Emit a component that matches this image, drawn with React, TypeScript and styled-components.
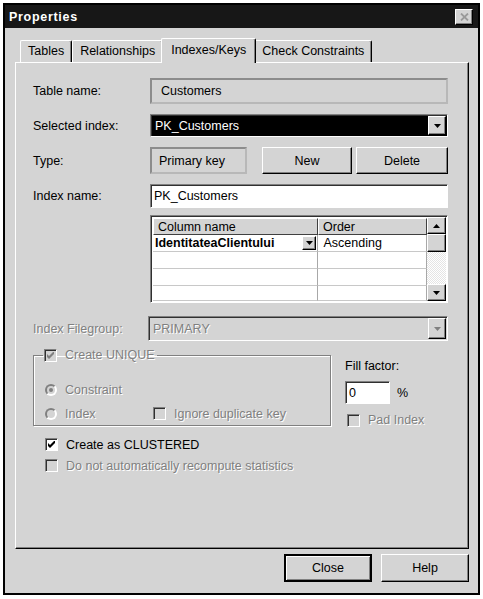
import React from 'react'
import styled, { createGlobalStyle, css } from 'styled-components'

const COLORS = {
  face: '#d4d4d4',
  light: '#ffffff',
  shadow: '#808080',
  dark: '#000000',
  title: '#171717',
}

const GlobalStyle = createGlobalStyle`
  body {
    margin: 0;
    background: #fff;
  }
`

const raised = css`
  box-sizing: border-box;
  border: 1px solid;
  border-color: ${COLORS.light} ${COLORS.dark} ${COLORS.dark} ${COLORS.light};
  box-shadow: inset -1px -1px ${COLORS.shadow};
  background: ${COLORS.face};
`

const sunken = css`
  box-sizing: border-box;
  border: 1px solid;
  border-color: ${COLORS.shadow} ${COLORS.light} ${COLORS.light} ${COLORS.shadow};
  padding: 1px;
  box-shadow: inset 1px 1px #303030;
`

const disabledText = css`
  color: ${COLORS.shadow};
  text-shadow: 1px 1px 0 ${COLORS.light};
`

const Window = styled('div')`
  margin: 3px 0 0 3px;
  width: 477px;
  height: 592px;
  box-sizing: border-box;
  border: 2px solid ${COLORS.dark};
  background: ${COLORS.face};
  display: flex;
  flex-direction: column;
  font-family: 'Liberation Sans', Arial, sans-serif;
  font-size: 12.5px;
  color: ${COLORS.dark};
`

const TitleBar = styled('div')`
  height: 23px;
  flex: none;
  background: ${COLORS.title};
  display: flex;
  align-items: center;
  justify-content: space-between;
  padding: 0 5px 0 4px;
`

const Title = styled('span')`
  color: #fff;
  font-weight: bold;
  letter-spacing: 0.7px;
`

const CloseBox = styled('div')`
  ${raised};
  width: 18px;
  height: 16px;
  display: flex;
  align-items: center;
  justify-content: center;
`

const Body = styled('div')`
  flex: 1;
  display: flex;
  flex-direction: column;
  padding-top: 10px;
`

const TabStrip = styled('div')`
  display: flex;
  align-items: flex-end;
  height: 24px;
  margin: 0 9px 0 10px;
  padding-left: 5px;
  position: relative;
  z-index: 1;
`

const Tab = styled('div')<{ $active?: boolean }>`
  box-sizing: border-box;
  height: ${(p) => (p.$active ? 25 : 22)}px;
  padding: 0 ${(p) => (p.$active ? 9 : 7)}px ${(p) => (p.$active ? 3 : 1)}px;
  margin: 0 ${(p) => (p.$active ? -2 : 0)}px ${(p) => (p.$active ? -1 : 0)}px;
  display: flex;
  align-items: center;
  border-top: 1px solid ${COLORS.light};
  border-left: 1px solid ${COLORS.light};
  border-right: 1px solid ${COLORS.dark};
  box-shadow: inset -1px 0 ${COLORS.shadow};
  border-radius: 2px 2px 0 0;
  background: ${COLORS.face};
  position: relative;
  z-index: ${(p) => (p.$active ? 2 : 1)};
  white-space: nowrap;
`

const Panel = styled('div')`
  height: 487px;
  flex: none;
  margin: 0 9px 0 10px;
  box-sizing: border-box;
  border-top: 1px solid ${COLORS.light};
  border-left: 1px solid ${COLORS.light};
  border-right: 1px solid ${COLORS.dark};
  border-bottom: 1px solid ${COLORS.dark};
  box-shadow: inset -1px -1px ${COLORS.shadow};
  padding: 15px 0 0 17px;
  display: flex;
  flex-direction: column;
`

const Row = styled('div')<{ $h: number; $gap?: number }>`
  display: flex;
  align-items: center;
  height: ${(p) => p.$h}px;
  margin-top: ${(p) => p.$gap ?? 0}px;
  flex: none;
`

const Label = styled('span')<{ $disabled?: boolean }>`
  width: 117px;
  flex: none;
  ${(p) => p.$disabled && disabledText};
`

const StaticBox = styled('div')<{ $w: number; $pad: number }>`
  box-sizing: border-box;
  width: ${(p) => p.$w}px;
  height: 100%;
  border: 2px solid;
  border-color: #8c8c8c #b8b8b8 #b8b8b8 #8c8c8c;
  padding-left: ${(p) => p.$pad}px;
  display: flex;
  align-items: center;
`

const Combo = styled('div')<{ $disabled?: boolean }>`
  ${sunken};
  height: 100%;
  display: flex;
  background: ${(p) => (p.$disabled ? COLORS.face : COLORS.dark)};
  margin-left: ${(p) => (p.$disabled ? -2 : 0)}px;
  width: ${(p) => (p.$disabled ? 300 : 298)}px;
`

const ComboText = styled('div')<{ $disabled?: boolean }>`
  flex: 1;
  display: flex;
  align-items: center;
  padding-left: 3px;
  color: ${(p) => (p.$disabled ? COLORS.shadow : COLORS.light)};
  ${(p) => p.$disabled && disabledText};
`

const DropButton = styled('div')<{ $w?: number }>`
  ${raised};
  width: ${(p) => p.$w ?? 18}px;
  flex: none;
  display: flex;
  align-items: center;
  justify-content: center;
`

const PushButton = styled('div')<{ $w: number; $gap?: number; $default?: boolean }>`
  ${raised};
  width: ${(p) => p.$w}px;
  height: 100%;
  margin-left: ${(p) => p.$gap ?? 0}px;
  display: flex;
  align-items: center;
  justify-content: center;
  ${(p) =>
    p.$default &&
    css`
      border-width: 2px;
      border-color: ${COLORS.dark};
      box-shadow: inset 1px 1px ${COLORS.light}, inset -1px -1px ${COLORS.shadow};
    `};
`

const TextInput = styled('div')<{ $w: number }>`
  ${sunken};
  width: ${(p) => p.$w}px;
  height: 100%;
  background: ${COLORS.light};
  padding-left: 3px;
  display: flex;
  align-items: center;
`

const GridFrame = styled('div')`
  ${sunken};
  width: 298px;
  height: 100%;
  display: flex;
  background: ${COLORS.light};
`

const GridBody = styled('div')`
  flex: 1;
  display: grid;
  grid-template-columns: 165px 1fr;
  grid-template-rows: 17px 17px 17px 17px 1fr;
  margin: 1px 0 0 1px;
`

const HeadCell = styled('div')`
  ${raised};
  border-color: ${COLORS.light} #404040 #404040 ${COLORS.light};
  box-shadow: none;
  padding-left: 4px;
  display: flex;
  align-items: center;
`

const Cell = styled('div')<{ $bold?: boolean }>`
  box-sizing: border-box;
  border-right: 1px solid #a8a8a8;
  border-bottom: 1px solid #c8c8c8;
  padding-left: 2px;
  display: flex;
  align-items: center;
  justify-content: space-between;
  font-weight: ${(p) => (p.$bold ? 'bold' : 'normal')};
`

const CellDrop = styled('div')`
  ${raised};
  width: 14px;
  height: 14px;
  margin-right: 1px;
  display: flex;
  align-items: center;
  justify-content: center;
`

const ScrollBar = styled('div')`
  width: 19px;
  flex: none;
  display: flex;
  flex-direction: column;
  background: repeating-conic-gradient(${COLORS.light} 0 25%, #e4e4e4 0 50%) 0 0 / 2px 2px;
`

const ScrollPart = styled('div')<{ $h?: number }>`
  ${raised};
  height: ${(p) => p.$h ?? 17}px;
  flex: none;
  display: flex;
  align-items: center;
  justify-content: center;
`

const ScrollTrack = styled('div')`
  flex: 1;
`

const Section = styled('div')`
  display: flex;
  align-items: flex-start;
  margin-top: 7px;
  flex: none;
`

const GroupBox = styled('fieldset')`
  box-sizing: border-box;
  width: 298px;
  height: 78px;
  margin: 0;
  padding: 0 8px 0 9px;
  border: 1px solid ${COLORS.shadow};
  box-shadow: inset 1px 1px ${COLORS.light}, 1px 1px ${COLORS.light};
  display: flex;
  flex-direction: column;
`

const Legend = styled('legend')`
  padding: 0 2px 0 1px;
  display: flex;
  align-items: center;
  gap: 8px;
  height: 14px;
  ${disabledText};
`

const OptionRow = styled('div')<{ $gap: number }>`
  display: flex;
  align-items: center;
  height: 15px;
  margin: ${(p) => p.$gap}px 0 0 2px;
`

const Option = styled('label')<{ $w?: number; $disabled?: boolean; $indent?: number }>`
  display: flex;
  align-items: center;
  gap: 8px;
  width: ${(p) => (p.$w ? `${p.$w}px` : 'auto')};
  margin-left: ${(p) => p.$indent ?? 0}px;
  ${(p) => p.$disabled && disabledText};
`

const CheckBox = styled('span')<{ $disabled?: boolean }>`
  ${sunken};
  width: 13px;
  height: 13px;
  flex: none;
  padding: 0;
  background: ${(p) => (p.$disabled ? COLORS.face : COLORS.light)};
  display: flex;
  align-items: center;
  justify-content: center;
  text-shadow: none;
`

const Radio = styled('span')`
  box-sizing: border-box;
  width: 12px;
  height: 12px;
  flex: none;
  border-radius: 50%;
  border: 2px solid;
  border-color: ${COLORS.shadow} ${COLORS.light} ${COLORS.light} ${COLORS.shadow};
  background: ${COLORS.face};
  display: flex;
  align-items: center;
  justify-content: center;
`

const RadioDot = styled('span')`
  width: 4px;
  height: 4px;
  border-radius: 50%;
  background: ${COLORS.shadow};
`

const FillColumn = styled('div')`
  margin-left: 14px;
  padding-top: 11px;
  display: flex;
  flex-direction: column;
`

const FillRow = styled('div')<{ $h: number; $gap: number }>`
  display: flex;
  align-items: center;
  gap: 7px;
  height: ${(p) => p.$h}px;
  margin-top: ${(p) => p.$gap}px;
`

const CheckRow = styled('div')<{ $gap: number }>`
  display: flex;
  align-items: center;
  height: 15px;
  margin: ${(p) => p.$gap}px 0 0 12px;
  flex: none;
`

const ButtonRow = styled('div')`
  display: flex;
  justify-content: flex-end;
  height: 28px;
  margin-top: 5px;
  padding-right: 9px;
  gap: 9px;
`

const Triangle = ({ up, color = '#000' }: { up?: boolean; color?: string }) => (
  <svg width="7" height="4" viewBox="0 0 7 4">
    <polygon points={up ? '3.5,0 7,4 0,4' : '0,0 7,0 3.5,4'} fill={color} />
  </svg>
)

const Tick = ({ color }: { color: string }) => (
  <svg width="7" height="7" viewBox="0 0 7 7">
    <polygon points="0,2 2,4 7,-1 7,2 2,7 0,5" fill={color} />
  </svg>
)

const TABS = ['Tables', 'Relationships', 'Indexes/Keys', 'Check Constraints']
const ACTIVE_TAB = 'Indexes/Keys'

const EMPTY_ROWS = [1, 2, 3]

const App = () => {
  return (
    <>
      <GlobalStyle />
      <Window>
        <TitleBar>
          <Title>Properties</Title>
          <CloseBox>
            <svg width="9" height="8" viewBox="0 0 9 8">
              <path d="M1 0.5 L8 7.5 M8 0.5 L1 7.5" stroke="#9a9a9a" strokeWidth="1.8" />
            </svg>
          </CloseBox>
        </TitleBar>
        <Body>
          <TabStrip>
            {TABS.map((t) => (
              <Tab key={t} $active={t === ACTIVE_TAB}>
                {t}
              </Tab>
            ))}
          </TabStrip>
          <Panel>
            <Row $h={26}>
              <Label>Table name:</Label>
              <StaticBox $w={298} $pad={9}>Customers</StaticBox>
            </Row>
            <Row $h={23} $gap={10}>
              <Label>Selected index:</Label>
              <Combo>
                <ComboText>PK_Customers</ComboText>
                <DropButton>
                  <Triangle />
                </DropButton>
              </Combo>
            </Row>
            <Row $h={27} $gap={10}>
              <Label>Type:</Label>
              <StaticBox $w={97} $pad={7}>Primary key</StaticBox>
              <PushButton $w={90} $gap={15}>New</PushButton>
              <PushButton $w={92} $gap={4}>Delete</PushButton>
            </Row>
            <Row $h={24} $gap={10}>
              <Label>Index name:</Label>
              <TextInput $w={298}>PK_Customers</TextInput>
            </Row>
            <Row $h={88} $gap={7}>
              <Label />
              <GridFrame>
                <GridBody>
                  <HeadCell>Column name</HeadCell>
                  <HeadCell>Order</HeadCell>
                  <Cell $bold>
                    IdentitateaClientului
                    <CellDrop>
                      <Triangle />
                    </CellDrop>
                  </Cell>
                  <Cell>&nbsp;Ascending</Cell>
                  {EMPTY_ROWS.map((r) => (
                    <React.Fragment key={r}>
                      <Cell />
                      <Cell />
                    </React.Fragment>
                  ))}
                </GridBody>
                <ScrollBar>
                  <ScrollPart>
                    <Triangle up />
                  </ScrollPart>
                  <ScrollPart $h={18} />
                  <ScrollTrack />
                  <ScrollPart>
                    <Triangle />
                  </ScrollPart>
                </ScrollBar>
              </GridFrame>
            </Row>
            <Row $h={25} $gap={13}>
              <Label $disabled>Index Filegroup:</Label>
              <Combo $disabled>
                <ComboText $disabled>PRIMARY</ComboText>
                <DropButton>
                  <Triangle color={COLORS.shadow} />
                </DropButton>
              </Combo>
            </Row>
            <Section>
              <GroupBox>
                <Legend>
                  <CheckBox $disabled>
                    <Tick color={COLORS.shadow} />
                  </CheckBox>
                  Create UNIQUE
                </Legend>
                <OptionRow $gap={20}>
                  <Option $disabled>
                    <Radio>
                      <RadioDot />
                    </Radio>
                    Constraint
                  </Option>
                </OptionRow>
                <OptionRow $gap={9}>
                  <Option $disabled $w={108}>
                    <Radio />
                    Index
                  </Option>
                  <Option $disabled>
                    <CheckBox $disabled />
                    Ignore duplicate key
                  </Option>
                </OptionRow>
              </GroupBox>
              <FillColumn>
                <span>Fill factor:</span>
                <FillRow $h={23} $gap={8}>
                  <TextInput $w={45}>0</TextInput>
                  %
                </FillRow>
                <FillRow $h={14} $gap={9}>
                  <Option $disabled $indent={2}>
                    <CheckBox $disabled />
                    Pad Index
                  </Option>
                </FillRow>
              </FillColumn>
            </Section>
            <CheckRow $gap={10}>
              <Option>
                <CheckBox>
                  <Tick color={COLORS.dark} />
                </CheckBox>
                Create as CLUSTERED
              </Option>
            </CheckRow>
            <CheckRow $gap={6}>
              <Option $disabled>
                <CheckBox $disabled />
                Do not automatically recompute statistics
              </Option>
            </CheckRow>
          </Panel>
          <ButtonRow>
            <PushButton $w={88} $default>
              Close
            </PushButton>
            <PushButton $w={88}>Help</PushButton>
          </ButtonRow>
        </Body>
      </Window>
    </>
  )
}

export default App
